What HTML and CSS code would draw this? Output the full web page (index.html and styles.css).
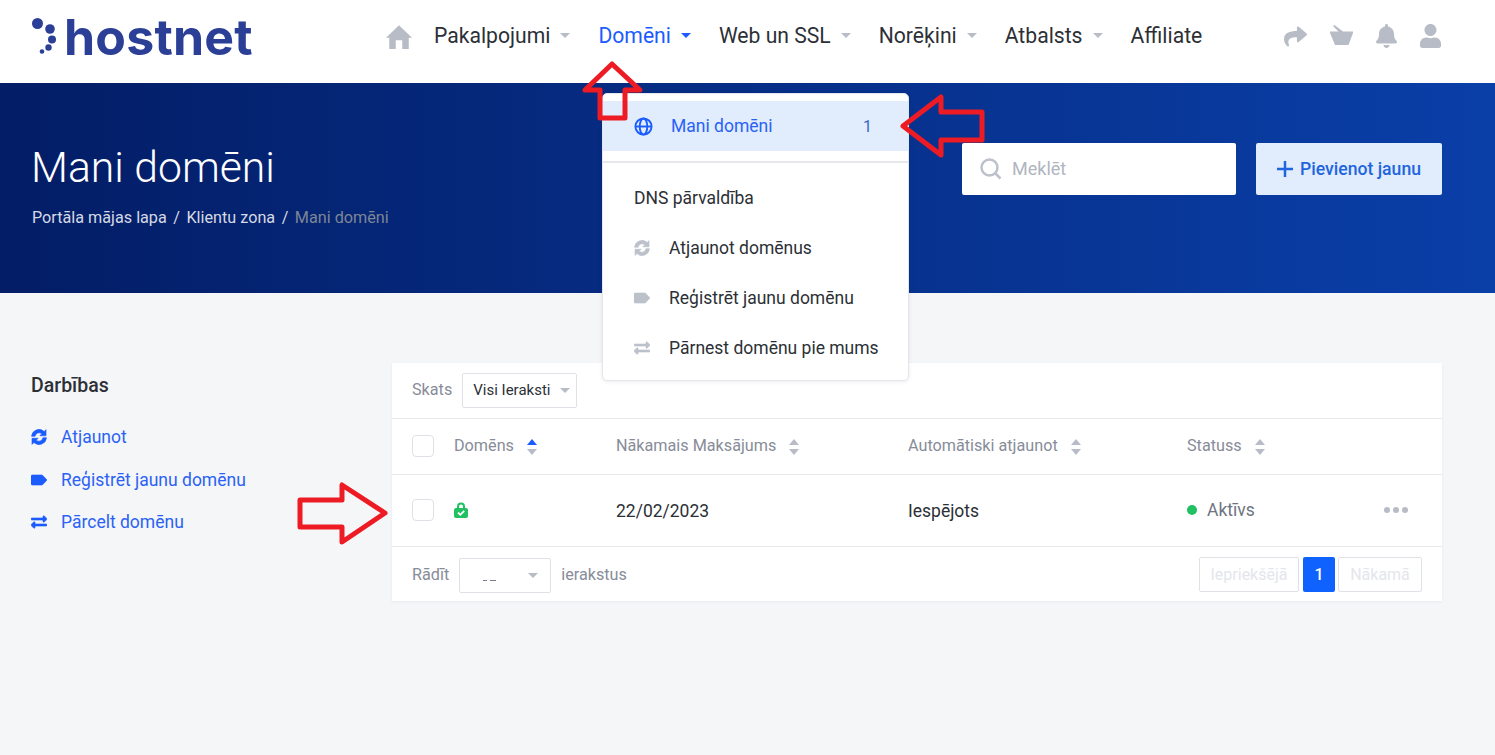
FILE: index.html
```html
<!DOCTYPE html>
<html lang="en">

<head>
    <meta charset="UTF-8">
    <meta name="viewport" content="width=device-width, initial-scale=1.0">
    <title>Mani domēni</title>
    <link rel="stylesheet" href="styles.css">
</head>

<body>
    <header class="topbar">
        <a class="logo">
            <svg class="logo-dots" viewBox="0 0 26 38" width="26" height="38">
                <circle cx="5.5" cy="5.5" r="5.5" />
                <circle cx="18" cy="11" r="4.8" />
                <circle cx="20" cy="21.5" r="4" />
                <circle cx="16.5" cy="29.5" r="3.2" />
                <circle cx="10" cy="33.5" r="2.3" />
            </svg>
            <span class="logo-text">hostnet</span>
        </a>
        <nav class="nav">
            <svg class="nav-home" viewBox="0 0 24 24" width="26" height="26">
                <path d="M12 2 L24 13.5 L21 13.5 L21 24 L15 24 L15 16 L9 16 L9 24 L3 24 L3 13.5 L0 13.5 Z" />
            </svg>
            <a class="nav-item">Pakalpojumi<i class="caret"></i></a>
            <a class="nav-item nav-active">Domēni<i class="caret"></i></a>
            <a class="nav-item">Web un SSL<i class="caret"></i></a>
            <a class="nav-item">Norēķini<i class="caret"></i></a>
            <a class="nav-item">Atbalsts<i class="caret"></i></a>
            <a class="nav-item">Affiliate</a>
        </nav>
        <div class="top-icons">
            <svg viewBox="0 0 512 512" width="23" height="23">
                <path d="M503.691 189.836L327.687 37.851C312.281 24.546 288 35.347 288 56.015v80.053C127.371 137.907 0 170.1 0 322.326c0 61.441 39.581 122.309 83.333 154.132 13.653 9.931 33.111-2.533 28.077-18.631C66.066 312.814 132.917 274.316 288 272.085V360c0 20.7 24.3 31.453 39.687 18.164l176.004-152c11.071-9.562 11.086-26.753 0-36.328z" />
            </svg>
            <svg class="basket" viewBox="0 0 23 20" width="23" height="20">
                <path d="M3 1 L4.500 0 L13 6.500 L23 6.500 L23 8 L18.500 20 L5 20 L0 8 L0 6.500 L8.500 6.500 Z" />
            </svg>
            <svg viewBox="0 0 448 512" width="21" height="24">
                <path d="M224 512c35.32 0 63.97-28.65 63.97-64H160.03c0 35.35 28.65 64 63.97 64zm215.39-149.71c-19.32-20.76-55.47-51.99-55.47-154.29 0-77.7-54.48-139.9-127.94-155.16V32c0-17.67-14.32-32-31.98-32s-31.98 14.33-31.98 32v20.84C118.56 68.1 64.08 130.3 64.08 208c0 102.3-36.15 133.53-55.47 154.29-6 6.45-8.66 14.16-8.61 21.71.11 16.4 12.98 32 32.1 32h383.8c19.12 0 32-15.6 32.1-32 .05-7.55-2.61-15.27-8.61-21.71z" />
            </svg>
            <svg viewBox="0 0 448 512" width="21" height="24">
                <path d="M224 256c70.7 0 128-57.3 128-128S294.7 0 224 0 96 57.3 96 128s57.3 128 128 128zm89.6 32h-16.7c-22.2 10.2-46.9 16-72.9 16s-50.6-5.8-72.9-16h-16.7C60.2 288 0 348.2 0 422.4V464c0 26.5 21.5 48 48 48h352c26.5 0 48-21.5 48-48v-41.6c0-74.2-60.2-134.4-134.4-134.4z" />
            </svg>
        </div>
    </header>

    <section class="banner">
        <div class="banner-left">
            <h1 class="banner-title">Mani domēni</h1>
            <div class="crumbs">
                <a>Portāla mājas lapa</a><span>/</span><a>Klientu zona</a><span>/</span><a class="crumb-now">Mani domēni</a>
            </div>
        </div>
        <div class="banner-right">
            <div class="search">
                <svg viewBox="0 0 22 22" width="22" height="22">
                    <circle cx="9.500" cy="9.500" r="8" />
                    <path d="M15.500 15.500 L20.500 20.500" />
                </svg>
                <span>Meklēt</span>
            </div>
            <a class="add-btn">
                <svg viewBox="0 0 16 16" width="16" height="16">
                    <path d="M8 0 V16 M0 8 H16" />
                </svg>
                Pievienot jaunu
            </a>
        </div>
    </section>

    <main class="content">
        <aside class="side">
            <h3 class="side-title">Darbības</h3>
            <a class="side-link">
                <svg class="fa" viewBox="0 0 512 512">
                    <use href="#i-sync" />
                </svg>Atjaunot
            </a>
            <a class="side-link">
                <svg class="fa" viewBox="0 0 512 512">
                    <use href="#i-tag" />
                </svg>Reģistrēt jaunu domēnu
            </a>
            <a class="side-link">
                <svg class="fa" viewBox="0 0 512 512">
                    <use href="#i-swap" />
                </svg>Pārcelt domēnu
            </a>
        </aside>

        <div class="card">
            <div class="toolbar">
                <span class="muted">Skats</span>
                <div class="select select-view">Visi Ieraksti<i class="caret"></i></div>
            </div>
            <div class="row row-head">
                <i class="check"></i>
                <span class="th">Domēns<i class="sort sort-on"></i></span>
                <span class="th">Nākamais Maksājums<i class="sort"></i></span>
                <span class="th">Automātiski atjaunot<i class="sort"></i></span>
                <span class="th">Statuss<i class="sort"></i></span>
                <span></span>
            </div>
            <div class="row row-body">
                <i class="check"></i>
                <span>
                    <svg class="lock" viewBox="0 0 14 16" width="14" height="16">
                        <path class="lock-body" fill-rule="evenodd" d="M3 6 V4.500 A4 4 0 0 1 11 4.500 V6 H12 Q14 6 14 8 V14 Q14 16 12 16 H2 Q0 16 0 14 V8 Q0 6 2 6 Z M5 6 H9 V4.500 A2 2 0 0 0 5 4.500 Z" />
                        <path class="lock-check" d="M4 10.500 L6.300 12.800 L10.200 8.800" />
                    </svg>
                </span>
                <span class="cell-text">22/02/2023</span>
                <span class="cell-text">Iespējots</span>
                <span class="status"><i class="dot"></i>Aktīvs</span>
                <span class="more"><i></i><i></i><i></i></span>
            </div>
            <div class="tfoot">
                <span class="muted">Rādīt</span>
                <div class="select select-len">
                    <span class="len-marks"><i></i><i></i></span>
                    <i class="caret"></i>
                </div>
                <span class="muted">ierakstus</span>
                <div class="pager">
                    <a class="page page-off page-prev">Iepriekšējā</a>
                    <a class="page page-on">1</a>
                    <a class="page page-off page-next">Nākamā</a>
                </div>
            </div>
        </div>
    </main>

    <div class="dropdown">
        <a class="drop-item drop-active">
            <svg class="globe" viewBox="0 0 20 20" width="19" height="19">
                <circle cx="10" cy="10" r="8.500" />
                <ellipse cx="10" cy="10" rx="4" ry="8.500" />
                <path d="M1.500 10 H18.500" />
            </svg>
            <span class="drop-label">Mani domēni</span>
            <span class="drop-count">1</span>
        </a>
        <div class="drop-sep"></div>
        <a class="drop-item drop-plain">DNS pārvaldība</a>
        <a class="drop-item">
            <svg class="fa" viewBox="0 0 512 512">
                <use href="#i-sync" />
            </svg>Atjaunot domēnus
        </a>
        <a class="drop-item">
            <svg class="fa" viewBox="0 0 512 512">
                <use href="#i-tag" />
            </svg>Reģistrēt jaunu domēnu
        </a>
        <a class="drop-item">
            <svg class="fa" viewBox="0 0 512 512">
                <use href="#i-swap" />
            </svg>Pārnest domēnu pie mums
        </a>
    </div>

    <!-- red arrows drawn over the page -->
    <svg class="arrows" viewBox="0 0 1495 755" width="1495" height="755">
        <polygon points="612,64 640,90 625,90 625,118 600,118 600,90 585,90" />
        <polygon points="903,126 941,97 941,112 982,112 982,140 941,140 941,155" />
        <polygon points="385,513 342,485 342,500 300,500 300,527 342,527 342,542" />
    </svg>

    <svg class="defs" width="0" height="0">
        <defs>
            <path id="i-sync" d="M16 232 A240 240 0 0 1 420 80 L480 20 V216 H284 L345 155 A130 130 0 0 0 130 232 Z M496 280 A240 240 0 0 1 92 432 L32 492 V296 H228 L167 357 A130 130 0 0 0 382 280 Z" />
            <path id="i-tag" d="M40 96 H340 Q362 96 378 112 L512 256 L378 400 Q362 416 340 416 H40 Q0 416 0 376 V136 Q0 96 40 96 Z" />
            <path id="i-swap" d="M0 168v-16c0-13.255 10.745-24 24-24h360V80c0-21.367 25.899-32.042 40.971-16.971l80 80c9.372 9.373 9.372 24.569 0 33.941l-80 80C409.956 271.982 384 261.456 384 240v-48H24c-13.255 0-24-10.745-24-24zm488 152H128v-48c0-21.314-25.862-32.08-40.971-16.971l-80 80c-9.372 9.373-9.372 24.569 0 33.941l80 80C102.057 463.997 128 453.437 128 432v-48h360c13.255 0 24-10.745 24-24v-16c0-13.255-10.745-24-24-24z" />
        </defs>
    </svg>
</body>

</html>
```

FILE: styles.css
```css
* {
    box-sizing: border-box;
}

body {
    margin: 0;
    position: relative;
    height: 755px;
    overflow: hidden;
    background-color: #f5f6f8;
    font-family: Roboto, sans-serif;
    color: #23282f;
}

/* Top bar */
.topbar {
    display: flex;
    align-items: center;
    height: 83px;
    padding-left: 32px;
    background-color: #fff;
}

.logo {
    display: flex;
    align-items: center;
    width: 354px;
    margin-top: -9px;
}

.logo-dots {
    fill: #2b3f96;
    margin-right: 6px;
}

.logo-text {
    font-family: Inter, sans-serif;
    font-weight: 700;
    font-size: 50px;
    line-height: 46px;
    letter-spacing: 0.2px;
    color: #2b3f96;
}

.nav {
    display: flex;
    align-items: center;
    margin-top: -12px;
}

.nav-home {
    fill: #b8bcc6;
    margin-right: 22px;
}

.nav-item {
    display: flex;
    align-items: center;
    margin-right: 28px;
    font-size: 21.150px;
    color: #2c3036;
}

.nav-item .caret {
    margin-left: 10px;
    border-top-color: #b8bcc6;
}

.nav-active {
    color: #1b5cff;
}

.nav-active .caret {
    border-top-color: #1b5cff;
}

.caret {
    display: inline-block;
    width: 0;
    height: 0;
    border-left: 5px solid transparent;
    border-right: 5px solid transparent;
    border-top: 5px solid #b8bcc6;
}

.top-icons {
    display: flex;
    align-items: center;
    gap: 23px;
    margin-left: 54px;
    margin-top: -11px;
    fill: #b8bcc6;
}

.basket {
    margin-top: -2px;
}

/* Banner */
.banner {
    display: flex;
    justify-content: space-between;
    height: 210px;
    padding: 60px 53px 0 32px;
    background-image: linear-gradient(90deg, #031d66, #0a3fa8);
}

.banner-title {
    margin: 0 0 0 -1px;
    font-size: 42.700px;
    line-height: 48px;
    font-weight: 300;
    color: #fff;
}

.crumbs {
    display: flex;
    gap: 6.500px;
    margin-top: 17px;
    font-size: 16.200px;
    line-height: 20px;
    color: #d5d9e4;
}

.crumb-now {
    color: #7d8597;
}

.banner-right {
    display: flex;
    gap: 20px;
}

.search {
    display: flex;
    align-items: center;
    width: 274px;
    height: 52px;
    padding-left: 18px;
    background-color: #fff;
    border-radius: 2px;
    font-size: 18px;
    color: #b0b5c0;
}

.search svg {
    margin-right: 10px;
    fill: none;
    stroke: #bcc1ca;
    stroke-width: 2.500;
}

.search span {
    margin-bottom: 2px;
}

.add-btn {
    display: flex;
    align-items: center;
    justify-content: center;
    gap: 7px;
    width: 186px;
    height: 52px;
    padding-bottom: 1px;
    background-color: #e1edfc;
    border-radius: 2px;
    font-size: 17.600px;
    font-weight: 500;
    color: #1f65de;
}

.add-btn svg {
    fill: none;
    stroke: #1f65de;
    stroke-width: 2.500;
}

/* Content */
.content {
    display: flex;
    padding: 70px 53px 0 31px;
}

.side {
    width: 361px;
}

.side-title {
    margin: 12px 0 30px;
    font-size: 19.500px;
    line-height: 22px;
    font-weight: 500;
    color: #2c3036;
}

.side-link {
    display: flex;
    align-items: center;
    height: 20px;
    margin-bottom: 22.500px;
    font-size: 17.500px;
    color: #2a62f5;
}

.fa {
    flex: none;
    width: 16px;
    height: 16px;
    margin-right: 14px;
    fill: #1b5cff;
    stroke: #1b5cff;
    stroke-width: 20;
}

.card {
    width: 1050px;
    height: 238px;
    background-color: #fff;
    box-shadow: 0 1px 3px rgba(30, 40, 60, 0.06);
}

.toolbar {
    display: flex;
    align-items: center;
    gap: 10px;
    height: 56px;
    padding: 0 20px;
    border-bottom: 1px solid #e6e8ec;
}

.toolbar .muted {
    margin-bottom: 2px;
}

.muted {
    font-size: 16.200px;
    color: #878c99;
}

.select {
    display: flex;
    align-items: center;
    justify-content: space-between;
    height: 35px;
    border: 1px solid #dfe1e6;
    border-radius: 2px;
    background-color: #fff;
}

.select-view {
    width: 115px;
    padding: 0 6px 2px 10px;
    font-size: 15px;
    color: #2c3036;
}

.select-view .caret {
    margin-top: 2px;
}

.select-len {
    width: 92px;
    margin-top: 2px;
    padding: 0 12px 0 23px;
}

/* the number in this box is blanked out in the reference */
.len-marks {
    display: flex;
    gap: 3px;
    margin-top: 9px;
}

.len-marks i {
    width: 4px;
    height: 1px;
    background-color: #777c88;
}

.len-marks i + i {
    width: 6px;
}

.row {
    display: grid;
    grid-template-columns: 42px 162px 292px 279px 197px 1fr;
    align-items: center;
    padding-left: 20px;
    padding-bottom: 2px;
    border-bottom: 1px solid #e6e8ec;
}

.row-head {
    height: 56px;
}

.row-body {
    height: 72px;
    font-size: 17.500px;
    color: #2c3036;
}

.cell-text {
    padding-top: 2px;
}

.th {
    display: flex;
    align-items: center;
    font-size: 16.200px;
    color: #878c99;
}

.check {
    display: block;
    width: 22px;
    height: 22px;
    border: 1px solid #dfe1e6;
    border-radius: 4px;
}

.sort {
    position: relative;
    display: block;
    width: 10px;
    height: 16px;
    margin-left: 13px;
    margin-top: 2px;
}

.sort::before,
.sort::after {
    content: "";
    position: absolute;
    left: 0;
    border-left: 5px solid transparent;
    border-right: 5px solid transparent;
}

.sort::before {
    top: 0;
    border-bottom: 6px solid #b8bcc6;
}

.sort::after {
    bottom: 0;
    border-top: 6px solid #b8bcc6;
}

.sort-on::before {
    border-bottom-color: #1b5cff;
}

.lock {
    display: block;
}

.lock-body {
    fill: #21c063;
}

.lock-check {
    fill: none;
    stroke: #fff;
    stroke-width: 1.800;
}

.status {
    display: flex;
    align-items: center;
    color: #6e7482;
}

.dot {
    width: 10px;
    height: 10px;
    margin-right: 10px;
    border-radius: 50%;
    background-color: #21c063;
}

.more {
    display: flex;
    gap: 3px;
}

.more i {
    width: 6px;
    height: 6px;
    border-radius: 50%;
    background-color: #b8bcc6;
}

.tfoot {
    display: flex;
    align-items: center;
    gap: 10px;
    height: 55px;
    padding: 0 20px;
}

.pager {
    display: flex;
    margin-left: auto;
}

.page {
    display: flex;
    align-items: center;
    justify-content: center;
    height: 35px;
    border-radius: 2px;
    font-size: 16px;
}

.page-off {
    border: 1px solid #dfe1e6;
    color: #e4e6ec;
}

.page-prev {
    width: 100px;
    margin-right: 4px;
}

.page-next {
    width: 84px;
    margin-left: 3px;
}

.page-on {
    width: 32px;
    background-color: #0f62fe;
    font-weight: 500;
    color: #fff;
}

/* Dropdown */
.dropdown {
    position: absolute;
    left: 602px;
    top: 93px;
    width: 307px;
    height: 288px;
    padding-top: 7px;
    background-color: #fff;
    border: 1px solid #e3e5ea;
    border-radius: 5px;
    box-shadow: 0 1px 4px rgba(30, 40, 60, 0.08);
}

.drop-item {
    display: flex;
    align-items: center;
    height: 50px;
    padding-left: 31px;
    font-size: 17.500px;
    color: #2c3036;
}

.drop-item .fa {
    fill: #bcc1ca;
    stroke: #bcc1ca;
    margin-right: 19px;
}

.drop-active {
    background-color: #e1edfc;
    color: #2a62f5;
}

.globe {
    flex: none;
    margin-right: 18px;
    fill: none;
    stroke: #1b5cff;
    stroke-width: 2;
}

.drop-label {
    flex: 1;
}

.drop-count {
    margin-right: 36px;
    font-size: 16px;
    color: #3a66c8;
}

.drop-sep {
    height: 2px;
    margin: 10px 0;
    background-color: #e6e8ec;
}

/* Arrows */
.arrows {
    position: absolute;
    left: 0;
    top: 0;
    fill: none;
    stroke: #ed1c24;
    stroke-width: 5;
    stroke-linejoin: round;
    pointer-events: none;
}

.defs {
    position: absolute;
}
```
